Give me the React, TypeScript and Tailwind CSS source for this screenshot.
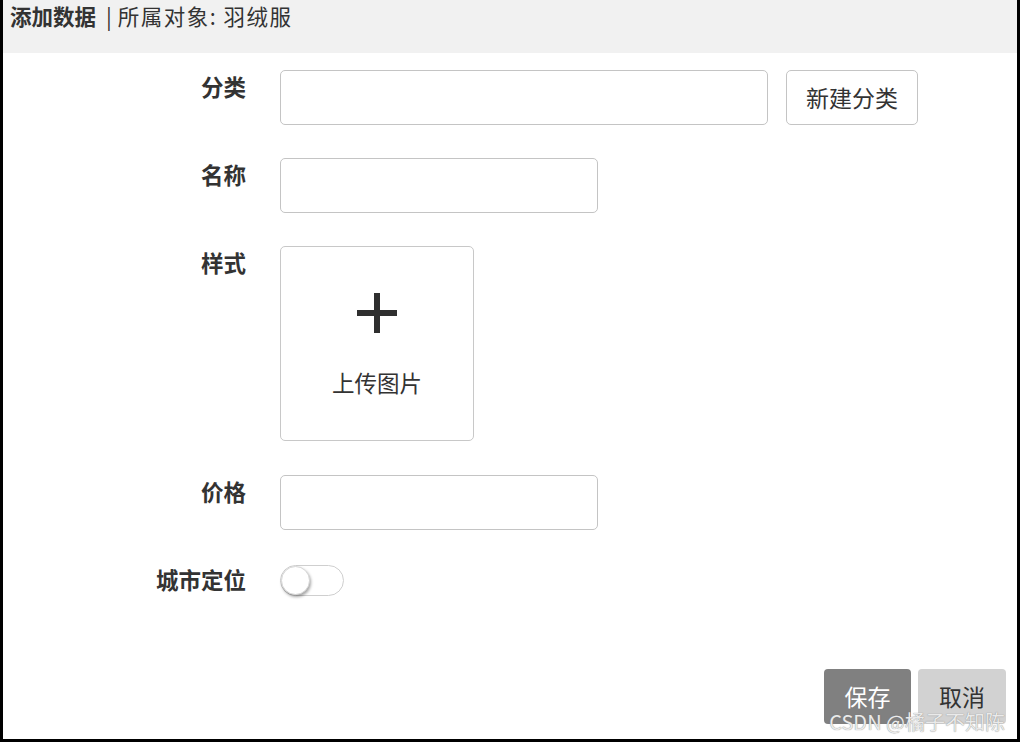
import React from "react";

const font = { fontFamily: '"Noto Sans CJK SC", "Noto Sans", sans-serif' };

function Label({ children }: { children: React.ReactNode }) {
  return (
    <div className="w-[243px] shrink-0 pt-[5px] text-right text-[22.5px] font-bold leading-[22px] text-[#333]">
      {children}
    </div>
  );
}

export default function App() {
  return (
    <div
      className="relative flex h-[742px] w-[1020px] flex-col overflow-hidden border-b-[3px] border-l-[3px] border-r-[3px] border-black bg-white"
      style={font}
    >
      <div className="flex h-[53px] shrink-0 items-start bg-[#f1f1f1] pl-[7px] pt-[3px] text-[21.5px] leading-[26px] text-[#333]">
        <span className="font-bold">添加数据</span>
        <span className="ml-[10px]">|</span>
        <span className="ml-[6px] tracking-[1.5px]">所属对象: 羽绒服</span>
      </div>

      <div className="flex flex-col pt-[17px]">
        <div className="flex items-start">
          <Label>分类</Label>
          <div className="ml-[34px] flex gap-[18px]">
            <div className="h-[55px] w-[488px] rounded-[5px] border border-[#c4c4c4] bg-white" />
            <div className="flex h-[55px] w-[132px] items-center justify-center rounded-[5px] border border-[#c4c4c4] bg-white text-[23px] text-[#333]">
              新建分类
            </div>
          </div>
        </div>

        <div className="mt-[33px] flex items-start">
          <Label>名称</Label>
          <div className="ml-[34px] h-[55px] w-[318px] rounded-[5px] border border-[#c4c4c4] bg-white" />
        </div>

        <div className="mt-[33px] flex items-start">
          <Label>样式</Label>
          <div className="ml-[34px] flex h-[195px] w-[194px] flex-col items-center rounded-[5px] border border-[#c8c8c8] bg-white">
            <svg width="40" height="40" viewBox="0 0 40 40" className="mt-[46px]">
              <rect x="17" y="0" width="6" height="40" fill="#2f2f2f" />
              <rect x="0" y="17" width="40" height="6" fill="#2f2f2f" />
            </svg>
            <div className="mt-[36px] text-[22.5px] leading-[26px] text-[#333]">上传图片</div>
          </div>
        </div>

        <div className="mt-[34px] flex items-start">
          <Label>价格</Label>
          <div className="ml-[34px] h-[55px] w-[318px] rounded-[5px] border border-[#c4c4c4] bg-white" />
        </div>

        <div className="mt-[35px] flex items-start">
          <div className="w-[243px] shrink-0 pt-[3px] text-right text-[22.5px] font-bold leading-[22px] text-[#333]">
            城市定位
          </div>
          <div className="relative ml-[34px] h-[31px] w-[64px] rounded-full border border-[#cfcfcf] bg-white">
            <div className="absolute left-0 top-0 h-[29px] w-[29px] rounded-full border border-[#d6d6d6] bg-white shadow-[1px_2px_3px_rgba(0,0,0,0.35)]" />
          </div>
        </div>
      </div>

      <div className="mt-auto flex justify-end gap-[7px] pb-[15px] pr-[11px]">
        <div className="flex h-[55px] w-[87px] items-center justify-center rounded-[4px] bg-[#808080] text-[23px] text-white">
          保存
        </div>
        <div className="flex h-[55px] w-[88px] items-center justify-center rounded-[4px] bg-[#d2d2d2] text-[23px] text-[#333]">
          取消
        </div>
      </div>

      <div className="absolute bottom-[6px] right-[12px] text-[20px] leading-[22px] text-[#eaeaea] [text-shadow:0_0_1px_#777]">
        CSDN @橘子不知陈
      </div>
    </div>
  );
}
